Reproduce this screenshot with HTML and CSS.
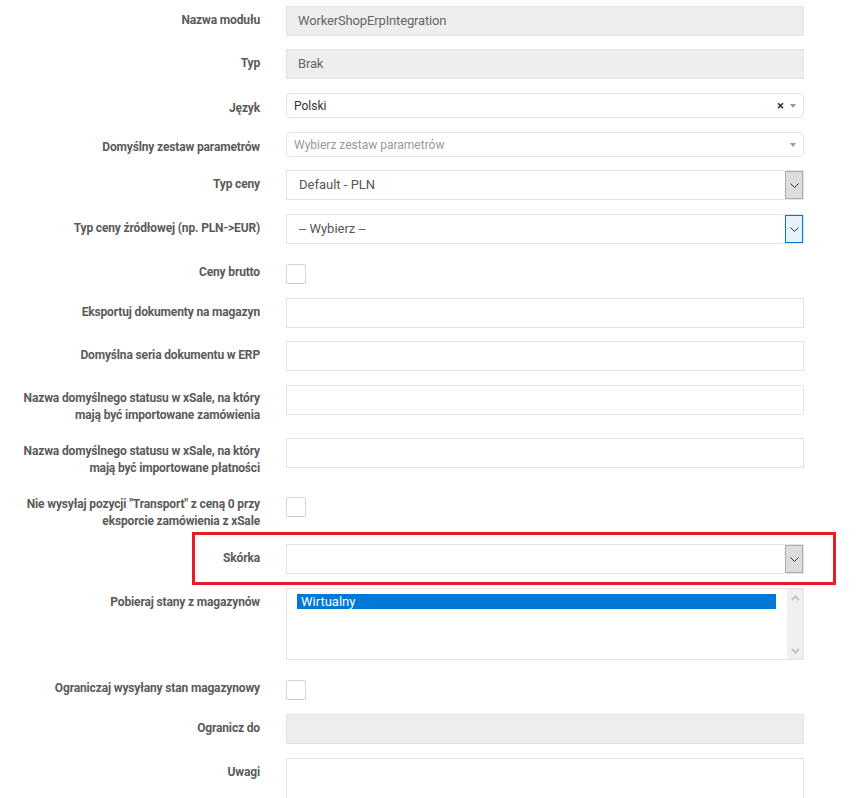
FILE: index.html
```html
<!DOCTYPE html>
<html lang="pl">
<head>
<meta charset="utf-8">
<title>Moduł</title>
<link rel="stylesheet" href="styles.css">
</head>
<body>
<form class="form">
  <div class="row tight">
    <label class="lbl">Nazwa modułu</label>
    <div class="ctl"><div class="input disabled">WorkerShopErpIntegration</div></div>
  </div>
  <div class="row">
    <label class="lbl">Typ</label>
    <div class="ctl"><div class="input disabled">Brak</div></div>
  </div>
  <div class="row">
    <label class="lbl lbl-s2">Język</label>
    <div class="ctl">
      <div class="s2">
        <span class="s2-text">Polski</span>
        <span class="s2-clear">×</span>
        <span class="s2-arrow"></span>
      </div>
    </div>
  </div>
  <div class="row tight">
    <label class="lbl lbl-s2">Domyślny zestaw parametrów</label>
    <div class="ctl">
      <div class="s2">
        <span class="s2-text placeholder">Wybierz zestaw parametrów</span>
        <span class="s2-arrow"></span>
      </div>
    </div>
  </div>
  <div class="row">
    <label class="lbl">Typ ceny</label>
    <div class="ctl">
      <div class="select">
        <span class="select-text">Default - PLN</span>
        <span class="select-btn"><svg width="9" height="5" viewBox="0 0 9 5"><path d="M0.5 0.5 L4.5 4.5 L8.5 0.5" fill="none" stroke="#333" stroke-width="1"/></svg></span>
      </div>
    </div>
  </div>
  <div class="row">
    <label class="lbl">Typ ceny źródłowej (np. PLN-&gt;EUR)</label>
    <div class="ctl">
      <div class="select">
        <span class="select-text">-- Wybierz --</span>
        <span class="select-btn focus"><svg width="9" height="5" viewBox="0 0 9 5"><path d="M0.5 0.5 L4.5 4.5 L8.5 0.5" fill="none" stroke="#333" stroke-width="1"/></svg></span>
      </div>
    </div>
  </div>
  <div class="row">
    <label class="lbl">Ceny brutto</label>
    <div class="ctl"><span class="checkbox"></span></div>
  </div>
  <div class="row tight">
    <label class="lbl">Eksportuj dokumenty na magazyn</label>
    <div class="ctl"><div class="input"></div></div>
  </div>
  <div class="row">
    <label class="lbl">Domyślna seria dokumentu w ERP</label>
    <div class="ctl"><div class="input"></div></div>
  </div>
  <div class="row">
    <label class="lbl lbl-2">Nazwa domyślnego statusu w xSale, na który mają być importowane zamówienia</label>
    <div class="ctl"><div class="input"></div></div>
  </div>
  <div class="row">
    <label class="lbl lbl-2">Nazwa domyślnego statusu w xSale, na który mają być importowane płatności</label>
    <div class="ctl"><div class="input"></div></div>
  </div>
  <div class="row">
    <label class="lbl lbl-2">Nie wysyłaj pozycji "Transport" z ceną 0 przy eksporcie zamówienia z xSale</label>
    <div class="ctl"><span class="checkbox"></span></div>
  </div>
  <div class="row row-mark">
    <label class="lbl">Skórka</label>
    <div class="ctl">
      <div class="select">
        <span class="select-text"></span>
        <span class="select-btn"><svg width="9" height="5" viewBox="0 0 9 5"><path d="M0.5 0.5 L4.5 4.5 L8.5 0.5" fill="none" stroke="#333" stroke-width="1"/></svg></span>
      </div>
    </div>
    <div class="mark"></div>
  </div>
  <div class="row">
    <label class="lbl">Pobieraj stany z magazynów</label>
    <div class="ctl">
      <div class="multi">
        <div class="multi-list">
          <div class="opt selected">Wirtualny</div>
        </div>
        <div class="scroll">
          <svg width="9" height="6" viewBox="0 0 9 6"><path d="M1 5 L4.5 1.5 L8 5" fill="none" stroke="#c3c3c3" stroke-width="2"/></svg>
          <svg width="9" height="6" viewBox="0 0 9 6"><path d="M1 1 L4.5 4.5 L8 1" fill="none" stroke="#c3c3c3" stroke-width="2"/></svg>
        </div>
      </div>
    </div>
  </div>
  <div class="row">
    <label class="lbl">Ograniczaj wysyłany stan magazynowy</label>
    <div class="ctl"><span class="checkbox"></span></div>
  </div>
  <div class="row">
    <label class="lbl">Ogranicz do</label>
    <div class="ctl"><div class="input disabled"></div></div>
  </div>
  <div class="row">
    <label class="lbl">Uwagi</label>
    <div class="ctl"><div class="textarea"></div></div>
  </div>
</form>
</body>
</html>
```

FILE: styles.css
```css
html, body {
  margin: 0;
  padding: 0;
  background: #fff;
}
body {
  font-family: Roboto, "Liberation Sans", Arial, sans-serif;
  overflow: hidden;
}
.form {
  padding-top: 6px;
  width: 866px;
}
.row {
  display: flex;
  align-items: flex-start;
  margin-bottom: 14px;
}
.row.tight { margin-bottom: 13px; }
.lbl {
  box-sizing: border-box;
  width: 286px;
  flex: none;
  padding: 6px 26px 0 15px;
  text-align: right;
  font-size: 12px;
  line-height: 17px;
  font-weight: 700;
  letter-spacing: -0.15px;
  color: #5a5a5a;
}
.lbl-s2 { padding-top: 7px; }
.lbl-2 { padding-top: 5px; padding-left: 0; }
.ctl {
  width: 518px;
  flex: none;
}
.input {
  box-sizing: border-box;
  height: 30px;
  border: 1px solid #e3e3e3;
  background: #fff;
  padding: 0 11px;
  font-size: 13px;
  line-height: 28px;
  letter-spacing: -0.15px;
  color: #666;
}
.input.disabled {
  background: #eeeeee;
}
.s2 {
  box-sizing: border-box;
  height: 25px;
  border: 1px solid #e3e3e3;
  border-radius: 4px;
  background: #fff;
  display: flex;
  align-items: center;
  padding: 0 0 0 7px;
}
.s2-text {
  flex: 1;
  font-size: 12px;
  color: #333;
}
.s2-text.placeholder { color: #999; }
.s2-clear {
  font-size: 13px;
  font-weight: 700;
  color: #333;
  margin-right: 6px;
  line-height: 1;
}
.s2-arrow {
  width: 0;
  height: 0;
  border-left: 3px solid transparent;
  border-right: 3px solid transparent;
  border-top: 4px solid #999;
  margin-right: 7px;
}
.select {
  box-sizing: border-box;
  height: 30px;
  border: 1px solid #e3e3e3;
  background: #fff;
  display: flex;
  align-items: stretch;
}
.select-text {
  flex: 1;
  padding-left: 12px;
  font-size: 13px;
  line-height: 28px;
  color: #555;
}
.select-btn {
  box-sizing: border-box;
  width: 18px;
  background: #dddddd;
  border: 1px solid #adadad;
  display: flex;
  align-items: center;
  justify-content: center;
}
.select-btn.focus {
  background: #e5f1fb;
  border-color: #0078d7;
}
.checkbox {
  display: block;
  box-sizing: border-box;
  width: 20px;
  height: 20px;
  margin-top: 6px;
  border: 1px solid #d6d6d2;
  border-bottom-color: #ccccc8;
  border-radius: 2px;
  background: #fff;
}
.row-mark { position: relative; }
.mark {
  position: absolute;
  left: 192px;
  top: -12px;
  width: 644px;
  height: 53px;
  box-sizing: border-box;
  border: 3px solid #e31e26;
  pointer-events: none;
}
.multi {
  box-sizing: border-box;
  height: 72px;
  border: 1px solid #e3e3e3;
  background: #fff;
  display: flex;
}
.multi-list {
  flex: 1;
  padding: 5px 11px 0 10px;
}
.opt {
  height: 15px;
  line-height: 15px;
  font-size: 13px;
  padding-left: 4px;
  color: #fff;
}
.opt.selected { background: #0078d7; }
.scroll {
  width: 16px;
  background: #f0f0f0;
  display: flex;
  flex-direction: column;
  justify-content: space-between;
  align-items: center;
  padding: 6px 0 5px;
}
.scroll svg { display: block; }
.textarea {
  box-sizing: border-box;
  height: 70px;
  border: 1px solid #e3e3e3;
  background: #fff;
}
```
